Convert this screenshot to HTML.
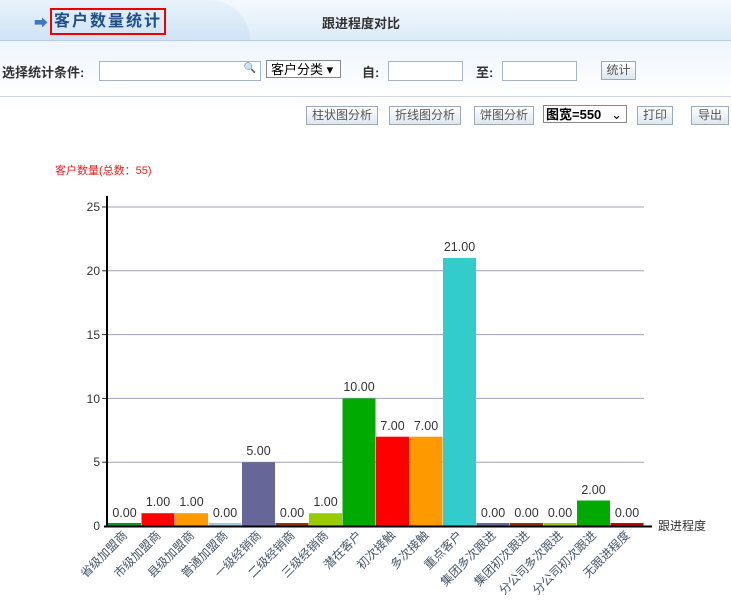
<!DOCTYPE html>
<html><head><meta charset="utf-8"><style>
body{margin:0;width:731px;height:606px;overflow:hidden;background:#fff;font-family:"Liberation Sans","Noto Sans CJK SC",sans-serif;font-size:12px;position:relative}
.hdr{position:absolute;left:0;top:0;width:731px;height:40px;background:linear-gradient(#f4f9fd,#dcebf8);border-bottom:1px solid #b8cfe3}
.tab{position:absolute;left:0;top:0;width:250px;height:40px;background:linear-gradient(#e8f2fb,#cfe3f5);border-top-right-radius:40px 40px}
.tab1{position:absolute;left:50px;top:8px;width:110px;height:23px;border:2px solid #e00;font-size:16px;font-weight:bold;color:#1f4e8c;line-height:23px;padding-left:2px;letter-spacing:2px}
.arrow{position:absolute;left:34px;top:13px;color:#3a7bc8;font-size:14px}
.tab2{position:absolute;left:322px;top:13px;font-weight:bold;color:#333;font-size:13px}
.row{position:absolute;left:0;top:41px;width:731px;height:55px;background:linear-gradient(#eef5fc,#fff);border-bottom:1px solid #cfd8e2}
.lbl{position:absolute;font-weight:bold;color:#333;font-size:13px}
.inp{position:absolute;height:18px;border:1px solid #a7b4c2;background:#fff}
.btn{position:absolute;height:17px;border:1px solid #9aaabb;background:linear-gradient(#fff,#dde6ef);color:#555;font-size:12px;line-height:17px;text-align:center}
.sel{position:absolute;height:18px;border:1px solid #888;background:#fff;font-size:13px;line-height:18px;color:#000}
</style></head><body>
<div class="hdr"></div>
<div class="tab"></div>
<div class="arrow">➡</div>
<div class="tab1">客户数量统计</div>
<div class="tab2">跟进程度对比</div>
<div class="row"></div>
<div class="lbl" style="left:2px;top:62px">选择统计条件:</div>
<div class="inp" style="left:99px;top:61px;width:160px"><span style="position:absolute;right:4px;top:1px;font-size:10px;color:#999">🔍</span></div>
<div class="sel" style="left:266px;top:60px;width:75px;padding-left:4px;box-sizing:border-box">客户分类 ▾</div>
<div class="lbl" style="left:362px;top:62px">自:</div>
<div class="inp" style="left:388px;top:61px;width:73px"></div>
<div class="lbl" style="left:476px;top:62px">至:</div>
<div class="inp" style="left:502px;top:61px;width:73px"></div>
<div class="btn" style="left:601px;top:61px;width:33px">统计</div>
<div class="btn" style="left:306px;top:106px;width:70px">柱状图分析</div>
<div class="btn" style="left:389px;top:106px;width:70px">折线图分析</div>
<div class="btn" style="left:474px;top:106px;width:58px">饼图分析</div>
<div class="sel" style="left:543px;top:105px;width:84px;font-weight:bold;padding-left:2px;box-sizing:border-box">图宽=550 <span style="font-weight:normal;float:right;margin-right:4px">⌄</span></div>
<div class="btn" style="left:637px;top:106px;width:34px">打印</div>
<div class="btn" style="left:691px;top:106px;width:36px">导出</div>
<svg style="position:absolute;left:0;top:0" width="731" height="606" font-family="Liberation Sans,Noto Sans CJK SC,sans-serif">
<text x="55" y="174" fill="#e02020" font-size="11">客户数量(总数：55)</text>
<g stroke="#a0a0c0" stroke-width="1">
<line x1="107" y1="207" x2="644" y2="207"/><line x1="107" y1="270.8" x2="644" y2="270.8"/><line x1="107" y1="334.6" x2="644" y2="334.6"/><line x1="107" y1="398.4" x2="644" y2="398.4"/><line x1="107" y1="462.2" x2="644" y2="462.2"/>
</g>
<g stroke="#333"><line x1="102" y1="207" x2="107" y2="207"/><line x1="102" y1="270.8" x2="107" y2="270.8"/><line x1="102" y1="334.6" x2="107" y2="334.6"/><line x1="102" y1="398.4" x2="107" y2="398.4"/><line x1="102" y1="462.2" x2="107" y2="462.2"/></g>
<g font-size="12" fill="#333" text-anchor="end">
<text x="100" y="211">25</text><text x="100" y="275">20</text><text x="100" y="339">15</text><text x="100" y="403">10</text><text x="100" y="466">5</text><text x="100" y="530">0</text>
</g>
<g>
<rect x="108" y="523" width="33" height="3" fill="#009933"/>
<rect x="141.5" y="513.2" width="33" height="12.8" fill="#ff0000"/>
<rect x="175" y="513.2" width="33" height="12.8" fill="#ff9900"/>
<rect x="208.5" y="523" width="33" height="3" fill="#99ccdd"/>
<rect x="242" y="462.2" width="33" height="63.8" fill="#666699"/>
<rect x="275.5" y="523" width="33" height="3" fill="#993300"/>
<rect x="309" y="513.2" width="33" height="12.8" fill="#99cc00"/>
<rect x="342.5" y="398.4" width="33" height="127.6" fill="#00aa00"/>
<rect x="376" y="436.7" width="33" height="89.3" fill="#ff0000"/>
<rect x="409.5" y="436.7" width="33" height="89.3" fill="#ff9900"/>
<rect x="443" y="258" width="33" height="268" fill="#33cccc"/>
<rect x="476.5" y="523" width="33" height="3" fill="#666699"/>
<rect x="510" y="523" width="33" height="3" fill="#993300"/>
<rect x="543.5" y="523" width="33" height="3" fill="#99cc00"/>
<rect x="577" y="500.5" width="33" height="25.5" fill="#00aa00"/>
<rect x="610.5" y="523" width="33" height="3" fill="#cc0000"/>
</g>
<g font-size="12.5" fill="#333" text-anchor="middle">
<text x="124.5" y="517">0.00</text><text x="158" y="506">1.00</text><text x="191.5" y="506">1.00</text><text x="225" y="517">0.00</text><text x="258.5" y="455">5.00</text><text x="292" y="517">0.00</text><text x="325.5" y="506">1.00</text><text x="359" y="391">10.00</text><text x="392.5" y="430">7.00</text><text x="426" y="430">7.00</text><text x="459.5" y="251">21.00</text><text x="493" y="517">0.00</text><text x="526.5" y="517">0.00</text><text x="560" y="517">0.00</text><text x="593.5" y="494">2.00</text><text x="627" y="517">0.00</text>
</g>
<line x1="107" y1="196" x2="107" y2="527" stroke="#000" stroke-width="2"/>
<line x1="104" y1="526.5" x2="652" y2="526.5" stroke="#000" stroke-width="2"/>
<text x="658" y="530" font-size="12" fill="#333">跟进程度</text>
<g font-size="12" fill="#456" text-anchor="end">
<text transform="translate(128,536) rotate(-45)">省级加盟商</text>
<text transform="translate(161.5,536) rotate(-45)">市级加盟商</text>
<text transform="translate(195,536) rotate(-45)">县级加盟商</text>
<text transform="translate(228.5,536) rotate(-45)">普通加盟商</text>
<text transform="translate(262,536) rotate(-45)">一级经销商</text>
<text transform="translate(295.5,536) rotate(-45)">二级经销商</text>
<text transform="translate(329,536) rotate(-45)">三级经销商</text>
<text transform="translate(362.5,536) rotate(-45)">潜在客户</text>
<text transform="translate(396,536) rotate(-45)">初次接触</text>
<text transform="translate(429.5,536) rotate(-45)">多次接触</text>
<text transform="translate(463,536) rotate(-45)">重点客户</text>
<text transform="translate(496.5,536) rotate(-45)">集团多次跟进</text>
<text transform="translate(530,536) rotate(-45)">集团初次跟进</text>
<text transform="translate(563.5,536) rotate(-45)">分公司多次跟进</text>
<text transform="translate(597,536) rotate(-45)">分公司初次跟进</text>
<text transform="translate(630.5,536) rotate(-45)">无跟进程度</text>
</g>
</svg>
</body></html>
